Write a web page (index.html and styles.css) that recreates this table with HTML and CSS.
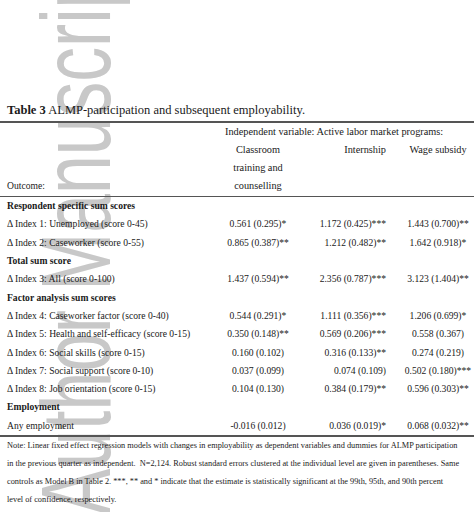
FILE: index.html
```html
<!DOCTYPE html>
<html>
<head>
<meta charset="utf-8">
<link rel="stylesheet" href="styles.css">
</head>
<body>
<div class="page">
  <div class="watermark">Author Manuscript</div>
  <div class="content">
    <p class="title"><b>Table 3</b> ALMP-participation and subsequent employability.</p>
    <div class="table">
      <div class="rule"></div>
      <div class="row">
        <div class="lab"></div>
        <div class="span">Independent variable: Active labor market programs:</div>
      </div>
      <div class="row head">
        <div class="lab lab-bottom">Outcome:</div>
        <div class="c1">Classroom<br>training and<br>counselling</div>
        <div class="c2">Internship</div>
        <div class="c3">Wage subsidy</div>
      </div>
      <div class="rule"></div>
      <div class="row"><div class="lab bold">Respondent specific sum scores</div></div>
      <div class="row"><div class="lab">Δ Index 1: Unemployed (score 0-45)</div><div class="c1">0.561 (0.295)*</div><div class="c2">1.172 (0.425)***</div><div class="c3">1.443 (0.700)**</div></div>
      <div class="row"><div class="lab">Δ Index 2: Caseworker (score 0-55)</div><div class="c1">0.865 (0.387)**</div><div class="c2">1.212 (0.482)**</div><div class="c3">1.642 (0.918)*</div></div>
      <div class="row"><div class="lab bold">Total sum score</div></div>
      <div class="row"><div class="lab">Δ Index 3: All (score 0-100)</div><div class="c1">1.437 (0.594)**</div><div class="c2">2.356 (0.787)***</div><div class="c3">3.123 (1.404)**</div></div>
      <div class="row"><div class="lab bold">Factor analysis sum scores</div></div>
      <div class="row"><div class="lab">Δ Index 4: Caseworker factor (score 0-40)</div><div class="c1">0.544 (0.291)*</div><div class="c2">1.111 (0.356)***</div><div class="c3">1.206 (0.699)*</div></div>
      <div class="row"><div class="lab">Δ Index 5: Health and self-efficacy (score 0-15)</div><div class="c1">0.350 (0.148)**</div><div class="c2">0.569 (0.206)***</div><div class="c3">0.558 (0.367)</div></div>
      <div class="row"><div class="lab">Δ Index 6: Social skills (score 0-15)</div><div class="c1">0.160 (0.102)</div><div class="c2">0.316 (0.133)**</div><div class="c3">0.274 (0.219)</div></div>
      <div class="row"><div class="lab">Δ Index 7: Social support (score 0-10)</div><div class="c1">0.037 (0.099)</div><div class="c2">0.074 (0.109)</div><div class="c3">0.502 (0.180)***</div></div>
      <div class="row"><div class="lab">Δ Index 8: Job orientation (score 0-15)</div><div class="c1">0.104 (0.130)</div><div class="c2">0.384 (0.179)**</div><div class="c3">0.596 (0.303)**</div></div>
      <div class="row"><div class="lab bold">Employment</div></div>
      <div class="row"><div class="lab">Any employment</div><div class="c1">-0.016 (0.012)</div><div class="c2">0.036 (0.019)*</div><div class="c3">0.068 (0.032)**</div></div>
      <div class="rule"></div>
    </div>
    <p class="note">Note: Linear fixed effect regression models with changes in employability as dependent variables and dummies for ALMP participation<br>in the previous quarter as independent. &nbsp;N=2,124. Robust standard errors clustered at the individual level are given in parentheses. Same<br>controls as Model B in Table 2. ***, ** and * indicate that the estimate is statistically significant at the 99th, 95th, and 90th percent<br>level of confidence, respectively.</p>
  </div>
</div>
</body>
</html>
```
FILE: styles.css
```css
html, body {
  margin: 0;
  padding: 0;
  background: #ffffff;
}
.page {
  position: relative;
  width: 474px;
  height: 512px;
  overflow: hidden;
  font-family: "Liberation Serif", "Times New Roman", serif;
  color: #1a1a1a;
}
.watermark {
  position: absolute;
  left: 27px;
  top: 515px;
  transform-origin: 0 0;
  transform: rotate(-90deg) scaleX(0.71);
  font-family: "Liberation Sans", Arial, sans-serif;
  font-size: 98px;
  line-height: 1;
  white-space: nowrap;
  color: #c8c8c8;
  z-index: 0;
}
.content {
  position: relative;
  z-index: 1;
}
.title {
  margin: 0;
  padding: 101px 0 0 7px;
  height: 20px;
  font-size: 12.5px;
  line-height: 18px;
}
.title b {
  font-weight: bold;
}
.table {
  font-size: 9.6px;
  line-height: 18.3px;
}
.rule {
  height: 1.5px;
  background: #555555;
}
.row {
  display: grid;
  grid-template-columns: 209px 84px 86px 88px;
  padding-left: 7px;
}
.lab {
  grid-column: 1;
  white-space: nowrap;
}
.lab-bottom {
  align-self: end;
}
.bold {
  font-weight: bold;
}
.span {
  grid-column: 2 / 5;
  padding-left: 9px;
  font-size: 10.3px;
  white-space: nowrap;
}
.head {
  font-size: 10.3px;
}
.head .lab {
  font-size: 9.6px;
}
.c1 {
  grid-column: 2;
  text-align: center;
  white-space: nowrap;
}
.c2 {
  grid-column: 3;
  text-align: right;
  white-space: nowrap;
}
.c3 {
  grid-column: 4;
  text-align: center;
  padding-left: 16px;
  white-space: nowrap;
}
.head .c2, .head .c3 {
  align-self: start;
}
.note {
  margin: 0;
  padding: 0 0 0 7px;
  font-size: 8.3px;
  line-height: 18.3px;
  white-space: nowrap;
}
```
